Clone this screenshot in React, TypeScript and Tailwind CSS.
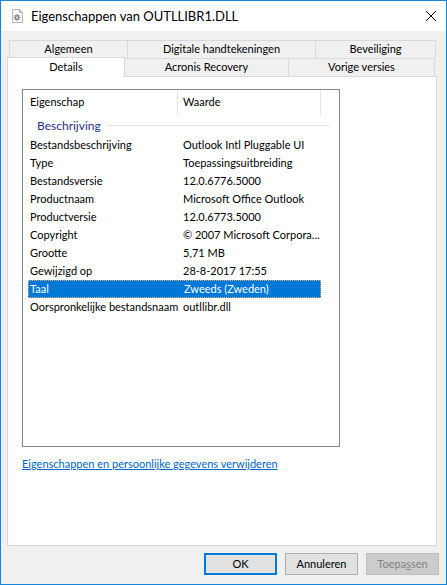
import React from 'react';

const rows: [string, string][] = [
  ['Bestandsbeschrijving', 'Outlook Intl Pluggable UI'],
  ['Type', 'Toepassingsuitbreiding'],
  ['Bestandsversie', '12.0.6776.5000'],
  ['Productnaam', 'Microsoft Office Outlook'],
  ['Productversie', '12.0.6773.5000'],
  ['Copyright', '© 2007 Microsoft Corpora...'],
  ['Grootte', '5,71 MB'],
  ['Gewijzigd op', '28-8-2017 17:55'],
  ['Taal', 'Zweeds (Zweden)'],
  ['Oorspronkelijke bestandsnaam', 'outllibr.dll'],
];

const FileIcon = () => (
  <svg width="11" height="14" viewBox="0 0 11 14" className="shrink-0">
    <path d="M0.5 0.5H7.5L10.5 3.5V13.5H0.5Z" fill="#fafafa" stroke="#b4b4b4" />
    <path d="M7.5 0.5V3.5H10.5" fill="none" stroke="#b4b4b4" />
    <g fill="#8c8c8c">
      <circle cx="5" cy="8.5" r="2.3" />
      <rect x="4.3" y="5.2" width="1.4" height="6.6" />
      <rect x="1.7" y="7.8" width="6.6" height="1.4" />
      <rect x="4.3" y="5.2" width="1.4" height="6.6" transform="rotate(45 5 8.5)" />
      <rect x="4.3" y="5.2" width="1.4" height="6.6" transform="rotate(-45 5 8.5)" />
    </g>
    <circle cx="5" cy="8.5" r="0.9" fill="#fafafa" />
  </svg>
);

const CloseIcon = () => (
  <svg width="10" height="10" viewBox="0 0 10 10" className="shrink-0">
    <path d="M0 0L10 10M10 0L0 10" stroke="#000" strokeWidth="1" />
  </svg>
);

export default function App() {
  return (
    <div className="w-[447px] h-[585px] border border-[#1883d7] bg-[#f0f0f0] flex flex-col text-[11px] text-black font-['Lato',sans-serif] overflow-hidden">
      {/* title bar */}
      <div className="h-[30px] bg-white flex items-center shrink-0">
        <div className="ml-[11px]">
          <FileIcon />
        </div>
        <div className="ml-[8px] text-[13px] leading-none">Eigenschappen van OUTLLIBR1.DLL</div>
        <div className="flex-1" />
        <div className="mr-[10px]">
          <CloseIcon />
        </div>
      </div>

      {/* tabs */}
      <div className="pt-[9px] flex flex-col">
        <div className="flex ml-[8px] h-[18px]">
          <div className="w-[118px] border-l border-t border-[#d9d9d9] flex items-center justify-center">Algemeen</div>
          <div className="w-[188px] border-l border-t border-[#d9d9d9] flex items-center justify-center">Digitale handtekeningen</div>
          <div className="w-[121px] border-l border-t border-r border-[#d9d9d9] flex items-center justify-center">Beveiliging</div>
        </div>
        <div className="flex items-end ml-[6px] w-[430px] h-[19px]">
          <div className="relative z-10 w-[118px] h-[20px] bg-white border-l border-t border-r border-[#d9d9d9] flex items-center justify-center pb-[1px]">Details</div>
          <div className="w-[164px] h-full border-t border-b border-r border-[#d9d9d9] flex items-center justify-center">Acronis Recovery</div>
          <div className="w-[146px] h-full border-t border-b border-r border-[#d9d9d9] flex items-center justify-center">Vorige versies</div>
          <div className="flex-1 h-full border-b border-[#d9d9d9]" />
        </div>
      </div>

      {/* panel */}
      <div className="ml-[6px] w-[430px] h-[469px] bg-white border-l border-r border-b border-[#d9d9d9] flex flex-col pl-[14px] pt-[12px]">
        <div className="w-[318px] h-[358px] border border-[#828790] flex flex-col">
          <div className="h-[25px] flex shrink-0">
            <div className="w-[154px] pl-[7px] flex items-center">Eigenschap</div>
            <div className="w-px h-full bg-[#e5e5e5]" />
            <div className="w-[142px] pl-[5px] flex items-center">Waarde</div>
            <div className="w-px h-full bg-[#e5e5e5]" />
          </div>
          <div className="h-[21px] flex items-center pl-[14px] shrink-0">
            <span className="text-[#1e3287] text-[12px]">Beschrijving</span>
            <div className="flex-1 h-px bg-[#dde5f1] ml-[6px] mr-[10px]" />
          </div>
          {rows.map(([k, v]) => {
            const sel = k === 'Taal';
            return (
              <div
                key={k}
                className={
                  sel
                    ? 'ml-[5px] w-[293px] h-[18px] flex items-center bg-[#0078d7] text-white border border-dotted border-[#d8b070]'
                    : 'ml-[5px] w-[293px] h-[18px] flex items-center'
                }
              >
                <div className={sel ? 'w-[155px] pl-[1px] whitespace-nowrap' : 'w-[155px] pl-[2px] whitespace-nowrap'}>{k}</div>
                <div className="whitespace-nowrap">{v}</div>
              </div>
            );
          })}
        </div>
        <div className="mt-[9px] leading-[16px] text-[#0066cc] underline">
          Eigenschappen en persoonlijke gegevens verwijderen
        </div>
      </div>

      {/* buttons */}
      <div className="flex justify-end gap-[8px] pr-[7px] mt-[7px]">
        <div className="w-[73px] h-[22px] bg-[#e1e1e1] border-2 border-[#0078d7] flex items-center justify-center">OK</div>
        <div className="w-[73px] h-[22px] bg-[#e1e1e1] border border-[#adadad] flex items-center justify-center">Annuleren</div>
        <div className="w-[73px] h-[22px] bg-[#cccccc] border border-[#bfbfbf] text-[#838383] flex items-center justify-center">
          Toepa<span className="underline">s</span>sen
        </div>
      </div>
    </div>
  );
}
